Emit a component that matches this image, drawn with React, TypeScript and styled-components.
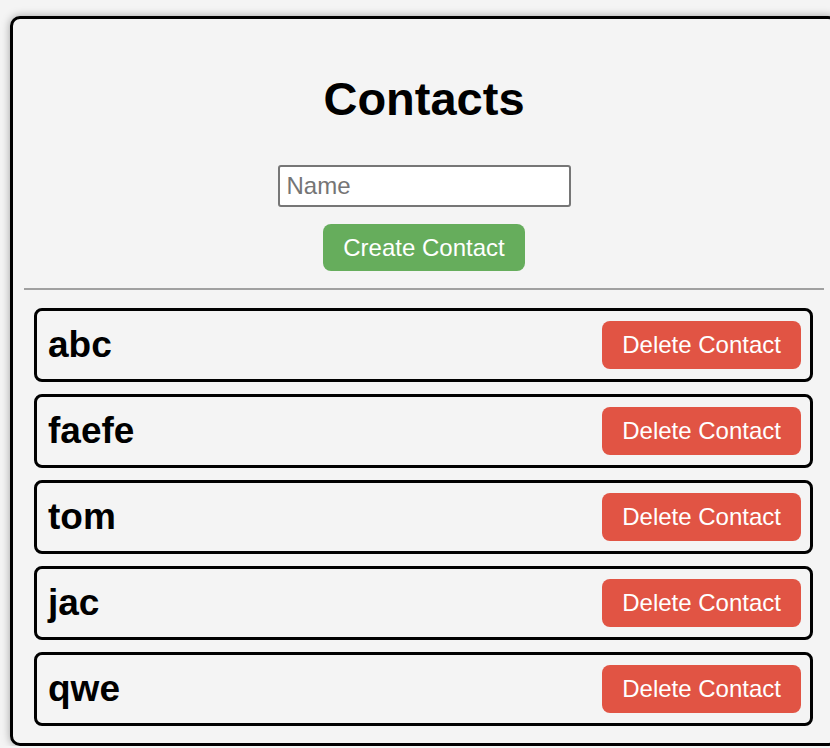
import React, { useState } from 'react'
import styled, { createGlobalStyle } from 'styled-components'

const GlobalStyle = createGlobalStyle`
  html, body {
    margin: 0;
    padding: 0;
    background: #f4f4f4;
    overflow: hidden;
    font-family: "Liberation Sans", Arial, sans-serif;
  }
`

const Colors = {
  BG: '#f4f4f4',
  Border: '#000000',
  Green: '#66ad5c',
  Red: '#e15444',
  Divider: '#a0a0a0',
  InputBorder: '#767676',
  Placeholder: '#757575',
}

const Card = styled.div`
  box-sizing: border-box;
  width: 828px;
  margin: 16px 0 0 10px;
  padding: 20px 11px 17px;
  border: 3px solid ${Colors.Border};
  border-radius: 10px;
  background-color: ${Colors.BG};
  box-shadow: 0 0 8px rgba(0, 0, 0, 0.35);
`

const Title = styled.h1`
  margin: 32px 0 0;
  font-size: 47px;
  font-weight: bold;
  line-height: 55px;
  text-align: center;
  color: #000;
`

const Form = styled.div`
  display: flex;
  flex-direction: column;
  align-items: center;
  margin-top: 39px;
  gap: 17px;
`

const NameInput = styled.input`
  box-sizing: border-box;
  width: 293px;
  height: 42px;
  padding: 0 7px;
  border: 2px solid ${Colors.InputBorder};
  border-radius: 3px;
  background: #fff;
  font-family: inherit;
  font-size: 24px;
  color: #000;
  outline: none;
  &::placeholder {
    color: ${Colors.Placeholder};
  }
`

const Button = styled.button<{ $variant: 'create' | 'delete' }>`
  box-sizing: border-box;
  height: ${(p) => (p.$variant === 'create' ? '47px' : '48px')};
  padding: 0 20px;
  border: none;
  border-radius: 8px;
  background-color: ${(p) => (p.$variant === 'create' ? Colors.Green : Colors.Red)};
  color: #fff;
  font-family: inherit;
  font-size: 24px;
  cursor: pointer;
`

const Divider = styled.hr`
  margin: 17px 0 0;
  border: none;
  border-top: 2px solid ${Colors.Divider};
`

const List = styled.ul`
  list-style: none;
  margin: 18px 0 0;
  padding: 0 11px 0 10px;
  display: flex;
  flex-direction: column;
  gap: 12px;
`

const Row = styled.li`
  display: flex;
  align-items: center;
  justify-content: space-between;
  height: 74px;
  box-sizing: border-box;
  padding: 0 9px 0 11px;
  border: 3px solid ${Colors.Border};
  border-radius: 8px;
`

const Name = styled.span`
  font-size: 37px;
  font-weight: bold;
  color: #000;
`

export default function App() {
  const [name, setName] = useState('')
  const [contacts, setContacts] = useState(['abc', 'faefe', 'tom', 'jac', 'qwe'])

  const create = () => {
    if (!name.trim()) return
    setContacts([...contacts, name.trim()])
    setName('')
  }

  return (
    <>
      <GlobalStyle />
      <Card>
        <Title>Contacts</Title>
        <Form>
          <NameInput
            placeholder="Name"
            value={name}
            onChange={(e) => setName(e.target.value)}
          />
          <Button $variant="create" onClick={create}>
            Create Contact
          </Button>
        </Form>
        <Divider />
        <List>
          {contacts.map((c, i) => (
            <Row key={i}>
              <Name>{c}</Name>
              <Button
                $variant="delete"
                onClick={() => setContacts(contacts.filter((_, j) => j !== i))}
              >
                Delete Contact
              </Button>
            </Row>
          ))}
        </List>
      </Card>
    </>
  )
}
